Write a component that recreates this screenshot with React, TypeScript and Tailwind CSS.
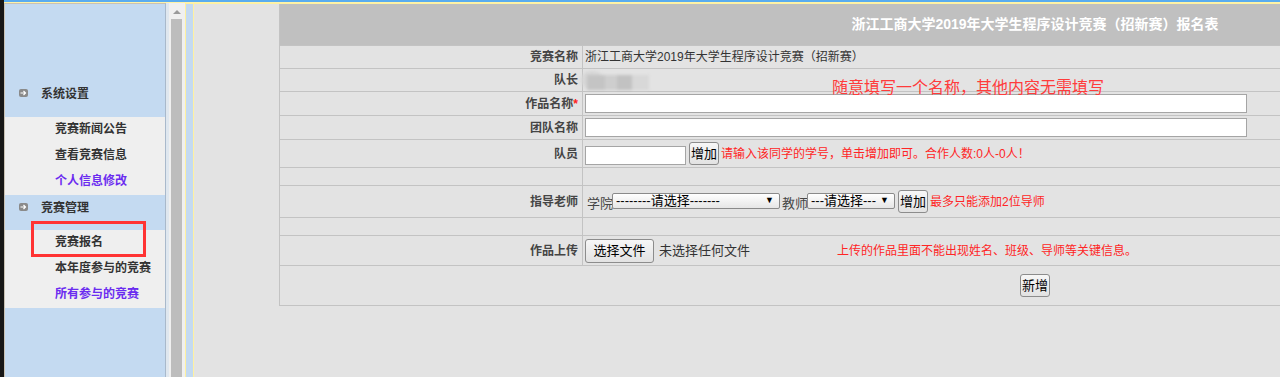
import React from "react";

function Btn({ children, className = "" }: { children: React.ReactNode; className?: string }) {
  return (
    <div
      className={
        "flex shrink-0 items-center justify-center rounded-[3px] border border-[#8c8c8c] bg-gradient-to-b from-[#f7f7f7] to-[#e2e2e2] text-[13px] text-black " +
        className
      }
    >
      {children}
    </div>
  );
}

function Select({ text, className = "" }: { text: string; className?: string }) {
  return (
    <div
      className={
        "relative flex h-[16px] shrink-0 items-center rounded-[2px] border border-[#8a8a8a] bg-gradient-to-b from-white to-[#e6e6e6] pl-[3px] text-[13px] leading-[14px] text-black " +
        className
      }
    >
      <span>{text}</span>
      <span className="absolute right-[5px] top-[0px] text-[9px] leading-[12px]">▼</span>
    </div>
  );
}

function Row({
  label,
  h,
  children,
  star = false,
}: {
  label?: string;
  h: string;
  children?: React.ReactNode;
  star?: boolean;
}) {
  return (
    <div className={"flex border-t border-[#c3c3c3] " + h}>
      <div className="flex w-[303px] shrink-0 items-center justify-end border-r border-[#c3c3c3] pr-[4px] text-[12px] font-bold text-[#454545]">
        {label}
        {star && <span className="text-[#ff2020]">*</span>}
      </div>
      <div className="flex flex-1 items-center pl-[2px]">{children}</div>
    </div>
  );
}

function MenuIcon() {
  return (
    <div className="ml-[14px] flex h-[8px] w-[9px] items-center justify-center rounded-[2px] bg-[#8a8a8a]">
      <svg width="7" height="6" viewBox="0 0 7 6">
        <path d="M0.5 3 H5.5 M3.5 1 L5.5 3 L3.5 5" stroke="white" strokeWidth="1.2" fill="none" />
      </svg>
    </div>
  );
}

export default function App() {
  return (
    <div className="relative flex h-[377px] w-[1280px] overflow-hidden bg-[#e3e3e3] font-['Liberation_Sans','Noto_Sans_CJK_SC',sans-serif]">
      <div className="w-[4px] shrink-0 bg-[#171717]" />
      <div className="flex min-w-0 flex-1 flex-col">
        <div className="h-[2px] shrink-0 bg-[#5aacef]" />
        <div className="h-[1px] shrink-0 bg-[#fff3a8]" />
        <div className="flex min-h-0 flex-1">
          {/* sidebar */}
          <div className="flex w-[162px] shrink-0 flex-col border-l border-r border-t border-l-[#c9c2b4] border-r-[#a9b9cb] border-t-[#c9c2b4] bg-[#c4daf1]">
            <div className="h-[113px] shrink-0 pt-[79px]">
              <div className="flex h-[20px] items-center">
                <MenuIcon />
                <span className="ml-[13px] pt-[2px] text-[12px] font-bold leading-[20px] text-[#333]">系统设置</span>
              </div>
            </div>
            <div className="shrink-0 bg-[#efefef] pl-[50px] pt-[2px] text-[12px] font-bold">
              <div className="mb-[6px] h-[20px] leading-[20px] text-[#333]">竞赛新闻公告</div>
              <div className="mb-[6px] h-[20px] leading-[20px] text-[#333]">查看竞赛信息</div>
              <div className="mb-[4px] h-[20px] leading-[20px] text-[#6b2cf0]">个人信息修改</div>
            </div>
            <div className="h-[35px] shrink-0 pt-[2px]">
              <div className="flex h-[20px] items-center">
                <MenuIcon />
                <span className="ml-[13px] pt-[1px] text-[12px] font-bold leading-[20px] text-[#333]">竞赛管理</span>
              </div>
            </div>
            <div className="shrink-0 bg-[#efefef] pl-[50px] pt-[2px] text-[12px] font-bold">
              <div className="mb-[6px] h-[20px] leading-[20px] text-[#333]">竞赛报名</div>
              <div className="mb-[6px] h-[20px] leading-[20px] text-[#333]">本年度参与的竞赛</div>
              <div className="mb-[4px] h-[20px] leading-[20px] text-[#6b2cf0]">所有参与的竞赛</div>
            </div>
          </div>
          <div className="w-[3px] shrink-0 bg-[#dfe7ef]" />
          {/* scrollbar */}
          <div className="flex w-[16px] shrink-0 flex-col bg-[#f0f0f0]">
            <div className="mx-auto mt-[7px] h-0 w-0 border-x-[4px] border-b-[4px] border-x-transparent border-b-[#9a9a9a]" />
            <div className="ml-[2px] mt-[5px] w-[11px] flex-1 bg-[#bdbdbd]" />
          </div>
          <div className="w-[1px] shrink-0 bg-[#fff1a0]" />
          <div className="w-[7px] shrink-0 border-t border-[#fff1a0] bg-[#c4daf1]" />
          <div className="w-[1px] shrink-0 bg-[#fff1a0]" />
          {/* content */}
          <div className="min-w-0 flex-1 overflow-hidden border-t border-[#fff1a0] pl-[85px]">
            <div className="w-[1511px] border-l border-[#c3c3c3]">
              <div className="flex h-[41px] items-center justify-center bg-[#c0c0c0] text-[14px] font-bold text-white">
                浙江工商大学2019年大学生程序设计竞赛（招新赛）报名表
              </div>
              <Row label="竞赛名称" h="h-[23px]">
                <span className="text-[12px] text-[#333]">浙江工商大学2019年大学生程序设计竞赛（招新赛）</span>
              </Row>
              <Row label="队长" h="h-[23px]">
                <div className="relative h-[20px] w-[68px] blur-[1.5px]">
                  <div className="absolute left-[-4px] top-[1px] h-[18px] w-[22px] rounded-full bg-[#d6d6d6]" />
                  <div className="absolute left-[2px] top-[5px] h-[15px] w-[18px] bg-[#c4c4c4]" />
                  <div className="absolute left-[20px] top-[5px] h-[15px] w-[12px] bg-[#cecece]" />
                  <div className="absolute left-[32px] top-[5px] h-[15px] w-[15px] bg-[#c2c2c2]" />
                  <div className="absolute left-[47px] top-[5px] h-[15px] w-[17px] bg-[#d8d8d8]" />
                </div>
              </Row>
              <Row label="作品名称" star h="h-[24px]">
                <div className="h-[19px] w-[662px] border border-[#a5a5a5] bg-white" />
              </Row>
              <Row label="团队名称" h="h-[24px]">
                <div className="h-[19px] w-[662px] border border-[#a5a5a5] bg-white" />
              </Row>
              <Row label="队员" h="h-[28px]">
                <div className="mt-[3px] h-[19px] w-[101px] border border-[#a5a5a5] bg-white" />
                <Btn className="ml-[3px] h-[23px] w-[30px]">增加</Btn>
                <span className="ml-[2px] text-[12px] text-[#ff2525]">
                  请输入该同学的学号，单击增加即可。合作人数:0人-0人！
                </span>
              </Row>
              <Row h="h-[18px]" />
              <Row label="指导老师" h="h-[32px]">
                <span className="mt-[4px] ml-[2px] text-[13px] text-[#454545]">学院</span>
                <Select text="--------请选择-------" className="ml-[-1px] mt-[-2px] w-[168px]" />
                <span className="mt-[4px] ml-[2px] text-[13px] text-[#454545]">教师</span>
                <Select text="---请选择---" className="ml-[-1px] mt-[-2px] w-[88px]" />
                <Btn className="ml-[3px] h-[23px] w-[30px]">增加</Btn>
                <span className="ml-[2px] text-[12px] text-[#ff2525]">最多只能添加2位导师</span>
              </Row>
              <Row h="h-[18px]" />
              <Row label="作品上传" h="h-[30px]">
                <Btn className="h-[24px] w-[69px]">选择文件</Btn>
                <span className="ml-[5px] text-[13px] text-[#333]">未选择任何文件</span>
                <span className="ml-[87px] text-[12px] text-[#ff2525]">
                  上传的作品里面不能出现姓名、班级、导师等关键信息。
                </span>
              </Row>
              <div className="flex h-[41px] justify-center border-y border-[#c3c3c3] pt-[8px]">
                <Btn className="h-[23px] w-[30px]">新增</Btn>
              </div>
            </div>
          </div>
        </div>
      </div>
      <div className="absolute left-[832px] top-[78px] text-[16px] leading-[20px] text-[#ff3b3b]">
        随意填写一个名称，其他内容无需填写
      </div>
      <div className="absolute left-[31px] top-[221px] h-[36px] w-[115px] border-[3px] border-[#ff3333]" />
    </div>
  );
}
